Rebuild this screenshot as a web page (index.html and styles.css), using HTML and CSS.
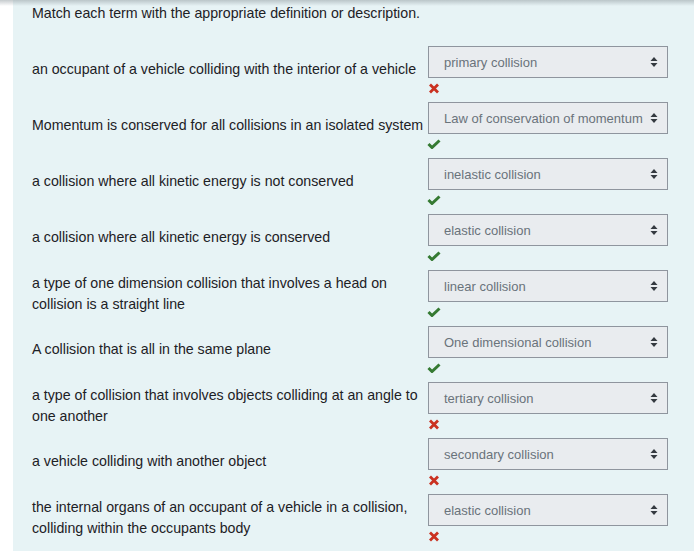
FILE: index.html
```html
<!DOCTYPE html>
<html>
<head>
<meta charset="utf-8">
<link rel="stylesheet" href="styles.css">
</head>
<body>
<div class="shade"></div>
<div class="panel">
  <div class="prompt">Match each term with the appropriate definition or description.</div>
  <div class="rows">
    <div class="row">
      <div class="text">an occupant of a vehicle colliding with the interior of a vehicle</div>
      <div class="control"><div class="select">primary collision</div><div class="fb"><svg class="x" viewBox="0 0 12 11"><path d="M2 1.5 L10 9.5 M10 1.5 L2 9.5"/></svg></div></div>
    </div>
    <div class="row">
      <div class="text">Momentum is conserved for all collisions in an isolated system</div>
      <div class="control"><div class="select">Law of conservation of momentum</div><div class="fb"><svg class="ok" viewBox="0 0 14 10"><path d="M1.5 5 L5 8.5 L12.5 1.5"/></svg></div></div>
    </div>
    <div class="row">
      <div class="text">a collision where all kinetic energy is not conserved</div>
      <div class="control"><div class="select">inelastic collision</div><div class="fb"><svg class="ok" viewBox="0 0 14 10"><path d="M1.5 5 L5 8.5 L12.5 1.5"/></svg></div></div>
    </div>
    <div class="row">
      <div class="text">a collision where all kinetic energy is conserved</div>
      <div class="control"><div class="select">elastic collision</div><div class="fb"><svg class="ok" viewBox="0 0 14 10"><path d="M1.5 5 L5 8.5 L12.5 1.5"/></svg></div></div>
    </div>
    <div class="row">
      <div class="text">a type of one dimension collision that involves a head on collision is a straight line</div>
      <div class="control"><div class="select">linear collision</div><div class="fb"><svg class="ok" viewBox="0 0 14 10"><path d="M1.5 5 L5 8.5 L12.5 1.5"/></svg></div></div>
    </div>
    <div class="row">
      <div class="text">A collision that is all in the same plane</div>
      <div class="control"><div class="select">One dimensional collision</div><div class="fb"><svg class="ok" viewBox="0 0 14 10"><path d="M1.5 5 L5 8.5 L12.5 1.5"/></svg></div></div>
    </div>
    <div class="row">
      <div class="text">a type of collision that involves objects colliding at an angle to one another</div>
      <div class="control"><div class="select">tertiary collision</div><div class="fb"><svg class="x" viewBox="0 0 12 11"><path d="M2 1.5 L10 9.5 M10 1.5 L2 9.5"/></svg></div></div>
    </div>
    <div class="row">
      <div class="text">a vehicle colliding with another object</div>
      <div class="control"><div class="select">secondary collision</div><div class="fb"><svg class="x" viewBox="0 0 12 11"><path d="M2 1.5 L10 9.5 M10 1.5 L2 9.5"/></svg></div></div>
    </div>
    <div class="row">
      <div class="text">the internal organs of an occupant of a vehicle in a collision, colliding within the occupants body</div>
      <div class="control"><div class="select">elastic collision</div><div class="fb"><svg class="x" viewBox="0 0 12 11"><path d="M2 1.5 L10 9.5 M10 1.5 L2 9.5"/></svg></div></div>
    </div>
  </div>
</div>
</body>
</html>
```
FILE: styles.css
```css
html, body {
  margin: 0;
  padding: 0;
  background: #ffffff;
  font-family: "Liberation Sans", Arial, sans-serif;
  font-size: 14.2px;
  color: #1d2125;
  overflow: hidden;
}
.shade {
  position: absolute;
  left: 0;
  top: 0;
  right: 0;
  height: 6px;
  background: linear-gradient(to bottom, rgba(150,160,165,0.55), rgba(190,200,205,0));
  pointer-events: none;
}
.panel {
  margin-left: 13px;
  background: #e7f3f5;
  min-height: 551px;
  padding: 3px 0 0 19px;
  box-sizing: border-box;
}
.prompt {
  line-height: 21px;
  margin-bottom: 22px;
}
.row {
  display: flex;
  align-items: flex-start;
  gap: 1px;
}
.text {
  width: 395px;
  min-height: 47px;
  display: flex;
  align-items: center;
  line-height: 21px;
}
.control {
  width: 240px;
}
.select {
  box-sizing: border-box;
  height: 32px;
  border: 1px solid #8f959e;
  background: #e9ecef;
  color: #6a737b;
  font-size: 13px;
  padding: 1px 28px 0 15px;
  line-height: 29px;
  white-space: nowrap;
  position: relative;
}
.select::after {
  content: "";
  position: absolute;
  right: 9px;
  top: 10px;
  width: 8px;
  height: 10px;
  background: url("data:image/svg+xml;utf8,<svg xmlns='http://www.w3.org/2000/svg' viewBox='0 0 8 10'><path d='M4 0 L7.5 4 L0.5 4 Z M4 10 L0.5 6 L7.5 6 Z' fill='%23343a40'/></svg>") no-repeat center;
}
.fb {
  height: 24px;
  position: relative;
}
.fb svg {
  position: absolute;
  top: 5px;
  left: 0;
  fill: none;
  stroke-linecap: butt;
}
.fb svg.x {
  width: 12px;
  height: 11px;
  stroke: #ca3120;
  stroke-width: 2.8;
}
.fb svg.ok {
  width: 14px;
  height: 10px;
  left: -1px;
  stroke: #357a32;
  stroke-width: 3;
}
```
